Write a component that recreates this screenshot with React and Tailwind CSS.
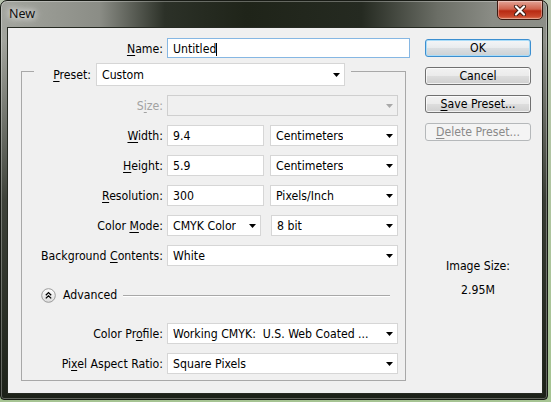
import React from 'react';

const Arrow = ({ disabled }) => (
  <svg width="7" height="4" viewBox="0 0 7 4" className="shrink-0">
    <path d="M0 0H7L3.5 4Z" fill={disabled ? '#a9a9a9' : '#000'} />
  </svg>
);

const Select = ({ value, className, disabled }) => (
  <div
    className={`${className} flex items-center justify-between border pl-[5px] pr-[4px] ${
      disabled ? 'bg-[#f0f0f0] border-[#cfcfcf]' : 'bg-white border-[#d6d6d6]'
    }`}
  >
    <span className="whitespace-pre truncate translate-y-[1px]">{value}</span>
    <Arrow disabled={disabled} />
  </div>
);

const Input = ({ value, className }) => (
  <div className={`${className} flex items-center bg-white border border-[#d6d6d6] pl-[5px]`}>
    <span className="translate-y-[1px]">{value}</span>
  </div>
);

const U = ({ children }) => <span className="underline underline-offset-[2px]">{children}</span>;

const Row = ({ label, children, className = 'mt-[9px]', muted }) => (
  <div className={`flex items-center h-[21px] ${className}`}>
    <div className={`w-[141px] text-right whitespace-nowrap translate-y-[1px] ${muted ? 'text-[#a2a2a2]' : ''}`}>{label}</div>
    <div className="ml-[4px] flex gap-[6px]">{children}</div>
  </div>
);

const Button = ({ children, kind }) => {
  const base = 'w-[106px] h-[18px] rounded-[3px] border flex items-center justify-center leading-none';
  if (kind === 'default')
    return (
      <div className={`${base} border-[#3c8fd0] bg-[linear-gradient(to_bottom,#f4f6f8_0%,#e9ecee_48%,#dbdfe2_52%,#ccd1d4_100%)] shadow-[inset_0_0_0_1px_#a9dcf8]`}>
        {children}
      </div>
    );
  if (kind === 'disabled')
    return <div className={`${base} border-[#b5b8ba] bg-[#f4f4f4] text-[#8a8a8a]`}>{children}</div>;
  return (
    <div className={`${base} border-[#707070] bg-[linear-gradient(to_bottom,#f2f2f2_0%,#ebebeb_48%,#dddddd_52%,#cfcfcf_100%)] shadow-[inset_0_0_0_1px_rgba(255,255,255,0.7)]`}>
      {children}
    </div>
  );
};

export default function App() {
  return (
    <div className="w-[551px] h-[402px] overflow-hidden bg-[linear-gradient(to_bottom,#b8c4ae,#a6c493)] font-['DejaVu_Sans_Condensed','DejaVu_Sans',sans-serif] text-[12.2px] text-black">
      <div className="w-[548px] h-[400px] rounded-t-[7px] rounded-b-[4px] border border-[#181b15] flex flex-col pl-[6px] pr-[4px] pb-[5px] shadow-[inset_0_0_0_1px_rgba(255,255,255,0.3)] bg-[linear-gradient(to_bottom,rgba(0,0,0,0)_0px,rgba(0,0,0,0)_40px,rgba(28,33,24,0.75)_200px,#1c2118_400px),linear-gradient(to_right,#a3a59e_0%,#8b8d86_18%,#2c3128_30%,#1f2419_45%,#252a21_66%,#6b6e66_80%,#8a8c85_90%,#8d8f88_100%)]">
        {/* Title bar */}
        <div className="h-[26px] flex items-start">
          <span className="ml-[2px] mt-[5px] text-[12.5px] leading-[15px] font-['Noto_Sans',sans-serif] text-[#101010] [text-shadow:0_0_6px_#fff,0_0_10px_rgba(255,255,255,0.8)]">
            New
          </span>
          <div className="ml-auto -mt-[1px] w-[46px] h-[20px] rounded-b-[5px] border border-[#3b1a12] flex items-center justify-center shadow-[inset_0_0_0_1px_rgba(255,255,255,0.35)] bg-[linear-gradient(to_bottom,#e3a396_0%,#d0634d_45%,#b82a12_55%,#c8462b_85%,#dd7856_100%)]">
            <svg width="14" height="11" viewBox="0 0 14 11">
              <path d="M3 1.5L11 9.5M11 1.5L3 9.5" stroke="#3a1a12" strokeWidth="4" strokeLinecap="round" />
              <path d="M3 1.5L11 9.5M11 1.5L3 9.5" stroke="#fff" strokeWidth="2.2" strokeLinecap="round" />
            </svg>
          </div>
        </div>

        {/* Client area */}
        <div className="flex-1 border border-[#262a22] bg-[#f0f0f0] flex">
          {/* Form */}
          <div className="w-[405px] flex flex-col">
            <div className="flex items-center h-[20px] mt-[10px]">
              <div className="w-[155px] text-right translate-y-[1px]">
                <U>N</U>ame:
              </div>
              <div className="ml-[4px] w-[243px] h-[20px] bg-white border border-[#86b7e3] flex items-center pl-[5px]">
                <span className="translate-y-[1px]">Untitled</span>
                <span className="w-px h-[13px] bg-black translate-y-[1px]" />
              </div>
            </div>

            {/* Preset group */}
            <div className="ml-[13px] mt-[13px] w-[385px] border border-[#a8a8a8] flex flex-col pb-[6px]">
              <div className="-mt-[9px] ml-[12px] w-[317px] h-[23px] bg-[#f0f0f0] flex items-center">
                <div className="w-[57px] text-right translate-y-[1px]">
                  <U>P</U>reset:
                </div>
                <Select value="Custom" className="ml-[5px] w-[249px] h-[23px]" />
              </div>

              <Row muted label={<>S<U>i</U>ze:</>}>
                <Select value="" disabled className="w-[231px] h-[21px]" />
              </Row>
              <Row label={<><U>W</U>idth:</>}>
                <Input value="9.4" className="w-[97px] h-[21px]" />
                <Select value="Centimeters" className="w-[128px] h-[21px]" />
              </Row>
              <Row label={<><U>H</U>eight:</>}>
                <Input value="5.9" className="w-[97px] h-[21px]" />
                <Select value="Centimeters" className="w-[128px] h-[21px]" />
              </Row>
              <Row label={<><U>R</U>esolution:</>}>
                <Input value="300" className="w-[97px] h-[21px]" />
                <Select value="Pixels/Inch" className="w-[128px] h-[21px]" />
              </Row>
              <Row label={<>Color <U>M</U>ode:</>}>
                <Select value="CMYK Color" className="w-[94px] h-[21px]" />
                <Select value="8 bit" className="w-[127px] h-[21px] ml-[4px]" />
              </Row>
              <Row label={<>Background <U>C</U>ontents:</>}>
                <Select value="White" className="w-[231px] h-[21px]" />
              </Row>

              {/* Advanced */}
              <div className="flex items-center mt-[21px] h-[16px] pl-[19px]">
                <svg width="15" height="15" viewBox="0 0 15 15" className="shrink-0">
                  <defs>
                    <linearGradient id="adv" x1="0" y1="0" x2="0" y2="1">
                      <stop offset="0" stopColor="#ffffff" />
                      <stop offset="1" stopColor="#dcdcdc" />
                    </linearGradient>
                  </defs>
                  <circle cx="7.5" cy="7.5" r="6.8" fill="url(#adv)" stroke="#9a9a9a" />
                  <path d="M4.8 7.2L7.5 4.6L10.2 7.2M4.8 10.4L7.5 7.8L10.2 10.4" stroke="#000" strokeWidth="1.3" fill="none" />
                </svg>
                <span className="ml-[7px]">Advanced</span>
                <div className="flex-1 ml-[6px] mr-[15px] border-t border-[#a8a8a8] shadow-[0_1px_0_#fff]" />
              </div>

              <Row className="mt-[20px]" label={<>Color Pr<U>o</U>file:</>}>
                <Select value="Working CMYK:  U.S. Web Coated ..." className="w-[231px] h-[21px]" />
              </Row>
              <Row label={<>Pi<U>x</U>el Aspect Ratio:</>}>
                <Select value="Square Pixels" className="w-[231px] h-[21px]" />
              </Row>
            </div>
          </div>

          {/* Buttons */}
          <div className="ml-[12px] w-[106px] flex flex-col items-center pt-[11px]">
            <div className="flex flex-col gap-[10px]">
              <Button kind="default">OK</Button>
              <Button>Cancel</Button>
              <Button>
                <span><U>S</U>ave Preset...</span>
              </Button>
              <Button kind="disabled">
                <span><U>D</U>elete Preset...</span>
              </Button>
            </div>
            <div className="mt-[117px] leading-[16px]">Image Size:</div>
            <div className="mt-[8px] leading-[16px]">2.95M</div>
          </div>
        </div>
      </div>
    </div>
  );
}
